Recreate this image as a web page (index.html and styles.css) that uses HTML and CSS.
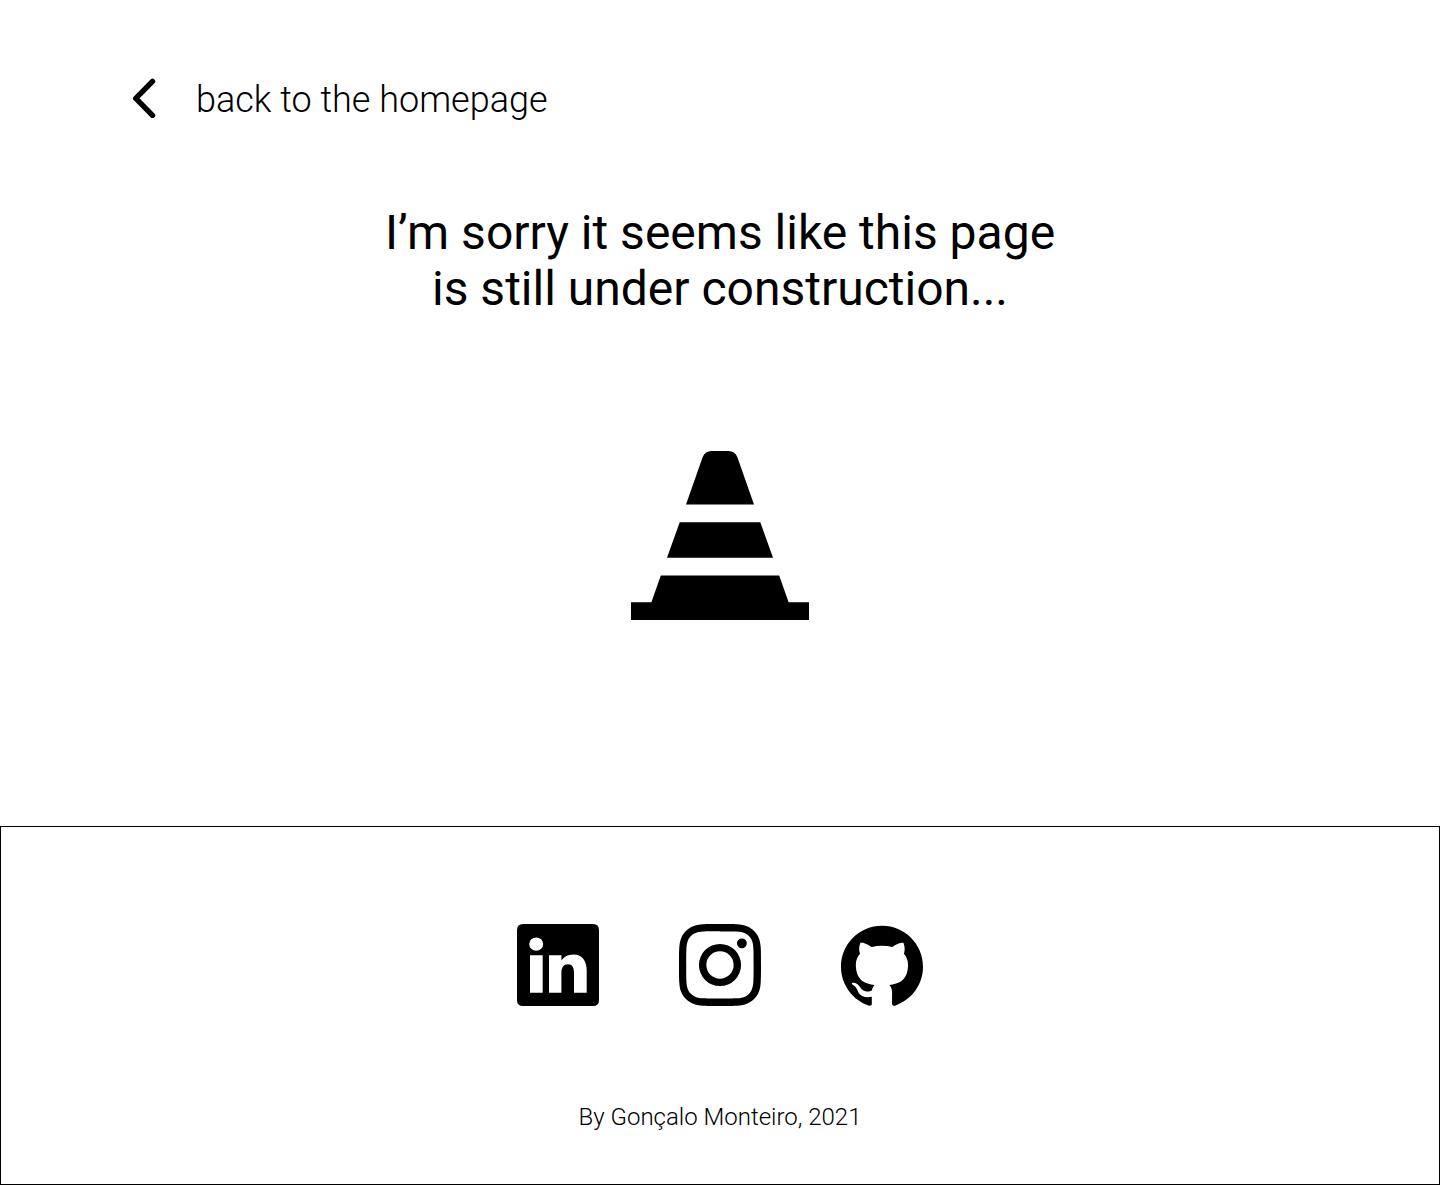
FILE: index.html
```html
<!DOCTYPE html>
<html lang="en">
<head>
<meta charset="utf-8">
<meta name="viewport" content="width=device-width, initial-scale=1">
<title>Under construction</title>
<link rel="stylesheet" href="styles.css">
</head>
<body>
<header class="header">
  <a class="back" href="#">
    <svg class="back-icon" viewBox="0 0 24 40" aria-hidden="true"><path d="M20.5 3.4 3.8 20.4l16.7 17" fill="none" stroke="currentColor" stroke-width="5.4" stroke-linecap="round" stroke-linejoin="round"/></svg>
    <span>back to the homepage</span>
  </a>
</header>
<main class="main">
  <h1 class="title">I’m sorry it seems like this page is still under construction...</h1>
  <svg class="cone" viewBox="0 0 178 169" role="img" aria-label="Traffic cone"><path d="M55 53.4 71.7 6Q74 0 80.500 0H97.500Q104 0 106.300 6L123 53.400ZM48.700 71.200H129.300L142 106.800H36ZM29.800 124.600H148.200L157.600 151.300H178V169H0V151.300H20.400Z"/></svg>
</main>
<footer class="footer">
  <nav class="social" aria-label="Social links">
    <a class="social-link" href="#" aria-label="LinkedIn"><svg class="social-icon" viewBox="0 0 82 82"><path fill-rule="evenodd" d="M6 0H76Q82 0 82 6V76Q82 82 76 82H6Q0 82 0 76V6Q0 0 6 0ZM19.200 13.400A7 6.700 0 1 0 19.200 26.800A7 6.700 0 1 0 19.200 13.400ZM13 31.300V68.700H25.700V31.300ZM32 31.300V68.700H44.400V49C44.400 43.500 46.800 40.300 51 40.300C55.200 40.300 57 43.500 57 49V68.700H69.700V46.500C69.700 36 64.500 30.400 56.500 30.400C50.500 30.400 46.500 33.200 44.400 36.500V31.300Z"/></svg></a>
    <a class="social-link" href="#" aria-label="Instagram"><svg class="social-icon" viewBox="0 0 24 24"><path d="M12 0C8.74 0 8.333.015 7.053.072 5.775.132 4.905.333 4.14.63c-.789.306-1.459.717-2.126 1.384S.935 3.35.63 4.14C.333 4.905.131 5.775.072 7.053.012 8.333 0 8.74 0 12s.015 3.667.072 4.947c.06 1.277.261 2.148.558 2.913.306.788.717 1.459 1.384 2.126.667.666 1.336 1.079 2.126 1.384.766.296 1.636.499 2.913.558C8.333 23.988 8.74 24 12 24s3.667-.015 4.947-.072c1.277-.06 2.148-.262 2.913-.558.788-.306 1.459-.718 2.126-1.384.666-.667 1.079-1.335 1.384-2.126.296-.765.499-1.636.558-2.913.06-1.28.072-1.687.072-4.947s-.015-3.667-.072-4.947c-.06-1.277-.262-2.149-.558-2.913-.306-.789-.718-1.459-1.384-2.126C21.319 1.347 20.651.935 19.86.63c-.765-.297-1.636-.499-2.913-.558C15.667.012 15.26 0 12 0zm0 2.16c3.203 0 3.585.016 4.85.071 1.17.055 1.805.249 2.227.415.562.217.96.477 1.382.896.419.42.679.819.896 1.381.164.422.36 1.057.413 2.227.057 1.266.07 1.646.07 4.85s-.015 3.585-.074 4.85c-.061 1.17-.256 1.805-.421 2.227-.224.562-.479.96-.899 1.382-.419.419-.824.679-1.38.896-.42.164-1.065.36-2.235.413-1.274.057-1.649.07-4.859.07-3.211 0-3.586-.015-4.859-.074-1.171-.061-1.816-.256-2.236-.421-.569-.224-.96-.479-1.379-.899-.421-.419-.69-.824-.9-1.38-.165-.42-.359-1.065-.42-2.235-.045-1.26-.061-1.649-.061-4.844 0-3.196.016-3.586.061-4.861.061-1.17.255-1.814.42-2.234.21-.57.479-.96.9-1.381.419-.419.81-.689 1.379-.898.42-.166 1.051-.361 2.221-.421 1.275-.045 1.65-.06 4.859-.06l.045.03zm0 3.678a6.162 6.162 0 1 0 0 12.324 6.162 6.162 0 1 0 0-12.324zM12 16c-2.21 0-4-1.79-4-4s1.79-4 4-4 4 1.79 4 4-1.79 4-4 4zm7.846-10.405a1.441 1.441 0 1 1-2.88 0 1.441 1.441 0 0 1 2.88 0z"/></svg></a>
    <a class="social-link" href="#" aria-label="GitHub"><svg class="social-icon" viewBox="0 -0.250 24 24"><path d="M12 .297c-6.63 0-12 5.373-12 12 0 5.303 3.438 9.8 8.205 11.385.6.113.82-.258.82-.577 0-.285-.01-1.04-.015-2.04-3.338.724-4.042-1.61-4.042-1.61C4.422 18.07 3.633 17.7 3.633 17.7c-1.087-.744.084-.729.084-.729 1.205.084 1.838 1.236 1.838 1.236 1.07 1.835 2.809 1.305 3.495.998.108-.776.417-1.305.76-1.605-2.665-.3-5.466-1.332-5.466-5.93 0-1.31.465-2.38 1.235-3.22-.135-.303-.54-1.523.105-3.176 0 0 1.005-.322 3.3 1.23.96-.267 1.98-.399 3-.405 1.02.006 2.04.138 3 .405 2.28-1.552 3.285-1.23 3.285-1.23.645 1.653.24 2.873.12 3.176.765.84 1.23 1.91 1.23 3.22 0 4.61-2.805 5.625-5.475 5.92.42.36.81 1.096.81 2.22 0 1.606-.015 2.896-.015 3.286 0 .315.21.69.825.57C20.565 22.092 24 17.592 24 12.297c0-6.627-5.373-12-12-12"/></svg></a>
  </nav>
  <p class="credit">By Gonçalo Monteiro, 2021</p>
</footer>
</body>
</html>
```
FILE: styles.css
```css
* { box-sizing: border-box; }
body {
  margin: 0;
  min-height: 100vh;
  display: flex;
  flex-direction: column;
  background: #fff;
  color: #000;
  font-family: Roboto, sans-serif;
}
.header { padding: 78px 132px 0; }
.back {
  display: inline-flex;
  align-items: flex-start;
  gap: 40px;
  color: inherit;
  font-size: 36px;
  font-weight: 300;
  line-height: 44px;
  text-decoration: none;
}
.back-icon { width: 24px; height: 40px; }
.main {
  flex: 1;
  display: flex;
  flex-direction: column;
  align-items: center;
  padding: 83px 24px 96px;
}
.title {
  max-width: 700px;
  margin: 0 0 134px;
  font-size: 48px;
  font-weight: 400;
  line-height: 56px;
  text-align: center;
}
.cone { width: 178px; height: 169px; }
.footer {
  display: flex;
  flex-direction: column;
  align-items: center;
  gap: 97px;
  padding: 97px 24px 53px;
  border: 1px solid #000;
}
.social { display: flex; gap: 80px; }
.social-link { color: inherit; }
.social-icon { display: block; width: 82px; height: 82px; fill: currentColor; }
.credit {
  margin: 0;
  font-size: 24px;
  font-weight: 300;
  line-height: 28px;
}
```
